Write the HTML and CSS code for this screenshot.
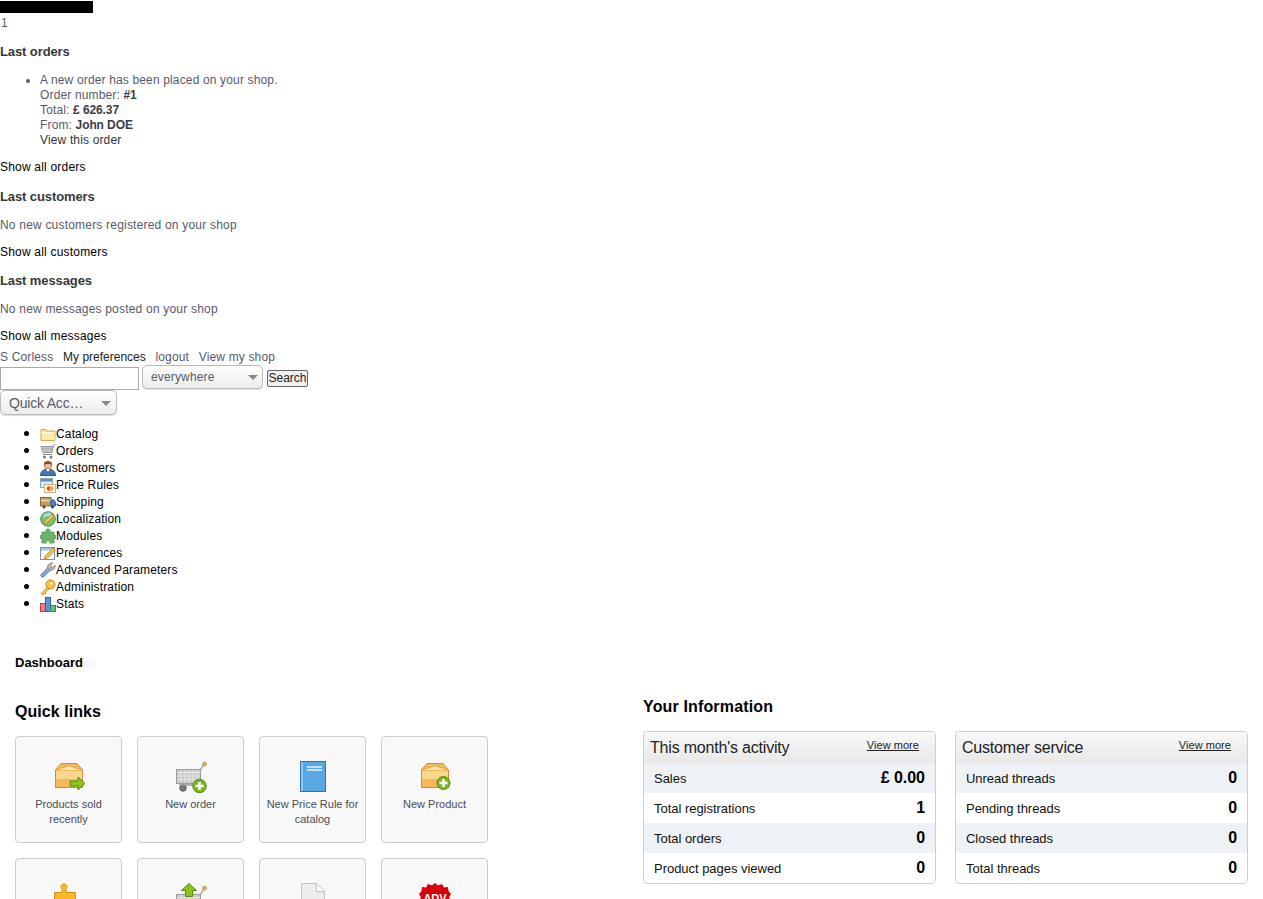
FILE: index.html
```html
<!DOCTYPE html>
<html lang="en">
<head>
<meta charset="utf-8">
<title>Dashboard</title>
<link rel="stylesheet" href="styles.css">
</head>
<body>
<div class="redacted"></div>
<a class="count" href="#">1</a>
<section class="notif">
  <h3>Last orders</h3>
  <ul class="notif-list">
    <li>A new order has been placed on your shop.<br>Order number: <b>#1</b><br>Total: <b>£ 626.37</b><br>From: <b>John DOE</b><br><a class="soft" href="#">View this order</a></li>
  </ul>
  <p><a href="#">Show all orders</a></p>
</section>
<section class="notif">
  <h3>Last customers</h3>
  <p>No new customers registered on your shop</p>
  <p><a href="#">Show all customers</a></p>
</section>
<section class="notif">
  <h3>Last messages</h3>
  <p>No new messages posted on your shop</p>
  <p><a href="#">Show all messages</a></p>
</section>
<div class="userbar">
  <span>S Corless</span><a class="prefs" href="#">My preferences</a><span>logout</span><span>View my shop</span>
</div>
<form class="searchbar">
  <input class="search-input" type="text" aria-label="Search">
  <div class="fake-select where"><span>everywhere</span><i class="caret"></i></div>
  <button class="search-btn" type="button">Search</button>
</form>
<div class="fake-select quick"><span>Quick Acc…</span><i class="caret"></i></div>

<ul class="menu">
  <li><svg class="mi" viewBox="0 0 16 16"><path d="M1 3.500h5l1 1.500h8v9.500H1z" fill="#f9df8e" stroke="#d9a651"/><path d="M2 7h12.500v7H2z" fill="#fdeeb0"/><path d="M1.500 6.500h13" stroke="#fff8d8"/></svg>Catalog</li>
  <li><svg class="mi" viewBox="0 0 16 16"><path d="M15.500 1.500l-2 1-1.500 7H3L1 3.500h12" fill="#d5d5d5" stroke="#8f8f8f"/><path d="M2 6h11M5 3.500l1 6M8 3.500v6M11 3.500l-.5 6" stroke="#a8a8a8" fill="none"/><path d="M3 11.500h9" stroke="#888"/><circle cx="4.500" cy="14" r="1.500" fill="#777"/><circle cx="11" cy="14" r="1.500" fill="#777"/></svg>Orders</li>
  <li><svg class="mi" viewBox="0 0 16 16"><path d="M.5 15.500c0-4 3-6.500 7.500-6.500s7.500 2.500 7.500 6.500z" fill="#3f78bd" stroke="#2b5a94"/><path d="M6 9l2 3 2-3z" fill="#fff"/><path d="M8 11l-.8 3h1.600z" fill="#c9422c"/><circle cx="8" cy="5" r="3.800" fill="#eebd90" stroke="#b97f52"/><path d="M4 5c-.5-5 8.500-5 8 0-1.500-1.500-6-1.500-8 0z" fill="#8a4a1e"/></svg>Customers</li>
  <li><svg class="mi" viewBox="0 0 16 16"><rect x=".5" y="1.500" width="12" height="9" fill="#dfe9f5" stroke="#8da9c9"/><rect x="1" y="2" width="11" height="2.500" fill="#5b8bc5"/><rect x="4.500" y="7.500" width="11" height="8" fill="#fff6e6" stroke="#cbb48f"/><circle cx="9" cy="11.500" r="2.200" fill="#e8402a"/><circle cx="11.500" cy="11.500" r="2.200" fill="#f2a52a"/></svg>Price Rules</li>
  <li><svg class="mi" viewBox="0 0 16 16"><rect x=".5" y="3.500" width="10.500" height="8.500" fill="#c79a5c" stroke="#8a6a3a"/><path d="M1 6.500h9.500" stroke="#f0dcb8" stroke-width="1.500"/><path d="M11 6h3l1.500 2.500V12H11z" fill="#4d8acb" stroke="#2d5f98"/><circle cx="4" cy="13" r="1.500" fill="#444"/><circle cx="12.500" cy="13" r="1.500" fill="#444"/></svg>Shipping</li>
  <li><svg class="mi" viewBox="0 0 16 16"><circle cx="8" cy="8" r="7.300" fill="#7cc06a" stroke="#4d8f52"/><path d="M3 4c2-2 5-3 8-2l1 2-3 2-2-1-3 2z" fill="#a6d6ea"/><path d="M4 13l1-3 7-7 2 2-7 7z" fill="#f4c04c" stroke="#b8862c" stroke-width=".7"/></svg>Localization</li>
  <li><svg class="mi" viewBox="0 0 16 16"><path d="M6 4V2.500c0-2 4-2 4 0V4h4v3.500h1.500c1 0 1 3 0 3H14V15H9.500v-1.500c0-1.500-3-1.500-3 0V15H2v-4.500H.5c-1 0-1-3 0-3H2V4z" fill="#69b26b" stroke="#4f9553" stroke-width=".8"/></svg>Modules</li>
  <li><svg class="mi" viewBox="0 0 16 16"><rect x=".5" y="2.500" width="14" height="12" fill="#fff" stroke="#6f95c7"/><rect x="1" y="3" width="13" height="2.500" fill="#a9c5e8"/><path d="M4 14l1-3 8-8 2.500 2-8 8z" fill="#f4c04c" stroke="#b8862c" stroke-width=".8"/></svg>Preferences</li>
  <li><svg class="mi" viewBox="0 0 16 16"><path d="M1 12.500l7-7 2.500 2.500-7 7c-1.500 1-3.500-1-2.500-2.500z" fill="#7fa6dc" stroke="#5078b0" stroke-width=".8"/><path d="M7.500 6c-.5-3 2-5.500 5.500-5l-2.500 2.500 2 2L15 3c.7 3.500-2.500 6-5.500 5z" fill="#b4b4b4" stroke="#808080" stroke-width=".8"/></svg>Advanced Parameters</li>
  <li><svg class="mi" viewBox="0 0 16 16"><circle cx="10.500" cy="5.500" r="4.500" fill="#f3c544" stroke="#b98a1e"/><circle cx="11.500" cy="4.500" r="1.200" fill="#fff3b8"/><path d="M7.500 8L1 14.500 2.500 16 4 14.500 5 15l1-1-.5-1L9 10z" fill="#f3c544" stroke="#b98a1e" stroke-width=".8"/></svg>Administration</li>
  <li><svg class="mi" viewBox="0 0 16 16"><rect x=".5" y="7.500" width="5" height="8" fill="#f08080" stroke="#cc3a3a"/><rect x="5.500" y="1.500" width="5" height="14" fill="#5b93dc" stroke="#2e62ad"/><rect x="10.500" y="9.500" width="5" height="6" fill="#5fc08c" stroke="#2f8f5c"/></svg>Stats</li>
</ul>

<h2 class="page-title">Dashboard</h2>

<main class="dash">
  <section class="quick-links">
    <h3 class="section-title links-title">Quick links</h3>
    <div class="tiles">
      <a class="tile" href="#">
        <svg class="ti" viewBox="0 0 32 32"><path d="M2.500 9L8 2.500h16L29.500 9v17.500h-27z" fill="#f6b95a" stroke="#cf8f35"/><path d="M3 10h26v8H3z" fill="#fad78f"/><path d="M3 9l13-4.500L29 9" fill="#fbe3b2" stroke="#dca658"/><path d="M17 20h8v-4l7 6.500-7 6.500v-4h-8z" fill="#8cc21f" stroke="#548c0c"/></svg>
        <span>Products sold recently</span>
      </a>
      <a class="tile" href="#">
        <svg class="ti" viewBox="0 0 32 32"><rect x="1.500" y="8.500" width="24" height="14" fill="#c8c8c8" stroke="#9a9a9a"/><path d="M2 11.500h23M2 15h23M2 18.500h23M6 9v13M10 9v13M14 9v13M18 9v13M22 9v13" stroke="#e6e6e6"/><path d="M25.500 8.500L29 3.500" stroke="#aaa" stroke-width="1.500"/><circle cx="29.500" cy="3" r="1.800" fill="#f5b54a" stroke="#c58d2f"/><circle cx="8" cy="27" r="3.200" fill="#777" stroke="#555"/><path d="M4 24h18" stroke="#999" stroke-width="1.500"/><circle cx="24.500" cy="25" r="6.700" fill="#7db81a" stroke="#4f8b0c"/><path d="M24.500 21v8M20.500 25h8" stroke="#fff" stroke-width="2.600"/></svg>
        <span>New order</span>
      </a>
      <a class="tile" href="#">
        <svg class="ti" viewBox="0 0 32 32"><rect x="3.500" y=".5" width="25" height="30" fill="#59a8e4" stroke="#2f73ad"/><rect x="4" y="1" width="2" height="29" fill="#8fc8ef"/><path d="M10 6h15M10 9h15" stroke="#e4f2fc" stroke-width="1.500"/></svg>
        <span>New Price Rule for catalog</span>
      </a>
      <a class="tile" href="#">
        <svg class="ti" viewBox="0 0 32 32"><path d="M2.500 9L8 2.500h16L29.500 9v17.500h-27z" fill="#f6b95a" stroke="#cf8f35"/><path d="M3 10h26v8H3z" fill="#fad78f"/><path d="M3 9l13-4.500L29 9" fill="#fbe3b2" stroke="#dca658"/><circle cx="24.500" cy="22" r="6.500" fill="#7db81a" stroke="#4f8b0c"/><path d="M24.500 18v8M20.500 22h8" stroke="#fff" stroke-width="2.600"/></svg>
        <span>New Product</span>
      </a>
      <a class="tile" href="#">
        <svg class="ti" viewBox="0 0 32 32"><path d="M1.500 9.500h7.500V6c-2-2-1-5 2-5s4 3 2 5v3.500h9.500v22h-21z" fill="#fbb828" stroke="#d68f12"/></svg>
      </a>
      <a class="tile" href="#">
        <svg class="ti" viewBox="0 0 32 32"><rect x="1.500" y="11.500" width="24" height="14" fill="#c8c8c8" stroke="#9a9a9a"/><path d="M2 14.500h23M6 12v13M10 12v13M14 12v13M18 12v13M22 12v13" stroke="#e6e6e6"/><path d="M25.500 11.500L29 6" stroke="#aaa" stroke-width="1.500"/><circle cx="29.500" cy="5" r="1.800" fill="#f5b54a" stroke="#c58d2f"/><path d="M14 .5l7.500 7h-4v6h-7v-6h-4z" fill="#8cc21f" stroke="#548c0c"/></svg>
      </a>
      <a class="tile" href="#">
        <svg class="ti" viewBox="0 0 32 32"><path d="M4.500 .5h15l8 8v23h-23z" fill="#ececec" stroke="#c4c4c4"/><path d="M19.500 .5v8h8z" fill="#fff" stroke="#c4c4c4"/></svg>
      </a>
      <a class="tile" href="#">
        <svg class="ti" viewBox="0 0 32 32"><path d="M16 0l3 2.500L23 1l2 3.500 4-.5.500 4 2.500 3-2 3.500 2 3.500-2.500 3-.5 4-4-.5-2 3.500-4-1.500-3 2.500-3-2.500-4 1.500-2-3.500-4 .5-.5-4L0 18l2-3.500L0 11l2.500-3 .5-4 4 .5L9 1l4 1.500z" fill="#d8000c"/><text class="adv" x="16" y="19" text-anchor="middle">ADV</text></svg>
      </a>
    </div>
  </section>
  <section class="info">
    <h3 class="section-title">Your Information</h3>
    <div class="panels">
      <div class="panel">
        <div class="panel-head"><span class="panel-title">This month's activity</span><a class="more" href="#">View more</a></div>
        <div class="row"><span>Sales</span><b>£ 0.00</b></div>
        <div class="row"><span>Total registrations</span><b>1</b></div>
        <div class="row"><span>Total orders</span><b>0</b></div>
        <div class="row"><span>Product pages viewed</span><b>0</b></div>
      </div>
      <div class="panel">
        <div class="panel-head"><span class="panel-title">Customer service</span><a class="more" href="#">View more</a></div>
        <div class="row"><span>Unread threads</span><b>0</b></div>
        <div class="row"><span>Pending threads</span><b>0</b></div>
        <div class="row"><span>Closed threads</span><b>0</b></div>
        <div class="row"><span>Total threads</span><b>0</b></div>
      </div>
    </div>
  </section>
</main>
</body>
</html>
```
FILE: styles.css
```css
html, body {
  margin: 0;
  height: 899px;
  overflow: hidden;
}
body {
  font-family: "Liberation Sans", Arial, sans-serif;
  font-size: 12px;
  line-height: 15px;
  letter-spacing: .15px;
  color: #585a69;
  background: #fff;
}
a { color: #000; text-decoration: none; }
.redacted { width: 93px; height: 12px; margin-top: 1px; background: #000; }
.count { display: block; height: 15px; margin-top: 3px; padding-left: 1px; color: #585a69; }
.notif h3 { margin: 14px 0; font-size: 13px; line-height: 15px; letter-spacing: -.1px; color: #383838; }
.notif:first-of-type h3 { margin-top: 13px; }
.notif:last-of-type h3 { margin-top: 13px; }
.notif p { margin: 12px 0; letter-spacing: .2px; }
.notif p:last-child { margin-bottom: 0; }
.notif-list { margin: 0; padding-left: 40px; }
.notif-list b { color: #3c3c46; letter-spacing: -.1px; }
.soft { color: #333; }
.userbar { display: flex; gap: 9.700px; margin-top: 6px; height: 14px; }
.prefs { letter-spacing: 0; color: #222; }
.searchbar { display: flex; align-items: center; height: 26px; }
.search-input {
  box-sizing: border-box; width: 139px; height: 23px; margin: 2px 3px 0 0; padding: 0;
  border: 1px solid #aaa; background: #fff;
}
.fake-select {
  box-sizing: border-box; display: flex; align-items: center; justify-content: space-between;
  border: 1px solid #bbb; border-radius: 5px; background: linear-gradient(#fff, #ececec);
  box-shadow: 0 1px 1px #ddd;
}
.where { width: 121px; height: 24px; padding: 1px 4px 0 8px; }
.quick { width: 117px; height: 25px; padding: 1px 5px 0 8px; font-size: 14px; letter-spacing: -.2px; }
.caret { width: 0; height: 0; border: 5px solid transparent; border-top: 5px solid #888; border-bottom: 0; }
.search-btn {
  box-sizing: border-box; width: 41px; height: 17px; margin: 3px 0 0 4px; padding: 0;
  border: 1px solid #666; border-radius: 2px; background: #f0f0f0;
  font: 12px/15px "Liberation Sans", Arial, sans-serif; color: #222;
}
.menu { margin: 9px 0 0; padding-left: 40px; color: #000; line-height: 17px; }
.menu li { height: 17px; }
.menu li::marker { font-size: 15px; }
.mi { width: 16px; height: 16px; vertical-align: -4px; }
.page-title { margin: 44px 0 0 15px; font-size: 13px; line-height: 15px; letter-spacing: 0; color: #000; }
.dash { display: flex; margin-top: 28px; padding-left: 15px; }
.section-title { margin: 0; font-size: 16px; line-height: 18px; color: #000; }
.links-title { margin-top: 5px; letter-spacing: .05px; }
.quick-links { width: 628px; flex: none; }
.tiles { display: grid; grid-template-columns: repeat(4, 107px); gap: 15px; margin-top: 15px; }
.tile {
  box-sizing: border-box; height: 107px; padding: 24px 6px 0; display: flex; flex-direction: column; align-items: center;
  background: #f8f8f8; border: 1px solid #ccc; border-radius: 4px;
  color: #4a4c5a; font-size: 11px; letter-spacing: 0; text-align: center;
}
.ti { display: block; width: 32px; height: 32px; flex: none; }
.adv { font-size: 11px; font-weight: 700; fill: #fff; }
.tile span { margin-top: 4px; }
.panels { display: flex; gap: 19px; margin-top: 15px; }
.panel {
  box-sizing: border-box; width: 293px; height: 153px; border: 1px solid #ccc; border-radius: 4px; overflow: hidden;
}
.panel-head {
  display: flex; justify-content: space-between; align-items: flex-start; height: 31px;
  padding: 0 16px 0 6px; background: linear-gradient(#f8f8f8, #e8e8e8);
}
.panel-title { margin-top: 8px; font-size: 16px; line-height: 16px; letter-spacing: -.2px; color: #222; }
.more { margin-top: 6px; font-size: 11px; line-height: 15px; letter-spacing: .05px; text-decoration: underline; color: #222; }
.row {
  display: flex; justify-content: space-between; align-items: center; height: 30px; padding: 0 10px;
  font-size: 13px; letter-spacing: -.03px; color: #111; background: #fff;
}
.row:nth-child(even) { background: #eef2f6; }
.row b { padding-bottom: 2px; font-size: 16px; color: #000; }
```
